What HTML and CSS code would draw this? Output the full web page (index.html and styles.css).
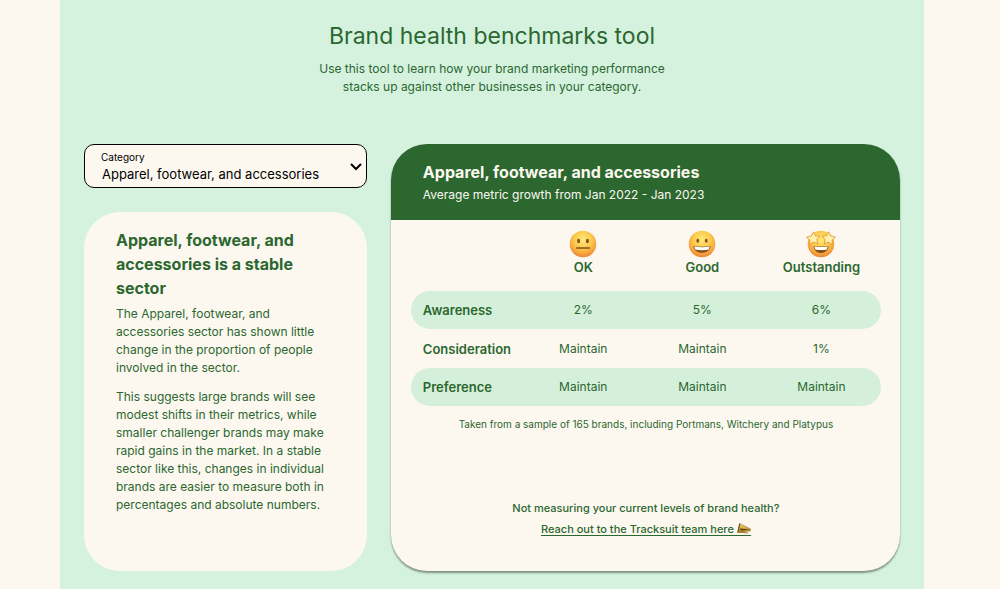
FILE: index.html
```html
<!DOCTYPE html>
<html lang="en">
<head>
<meta charset="utf-8">
<meta name="viewport" content="width=device-width, initial-scale=1">
<title>Brand health benchmarks tool</title>
<link rel="stylesheet" href="styles.css">
</head>
<body>
<svg width="0" height="0" class="defs" aria-hidden="true">
  <defs>
    <radialGradient id="face" cx="50%" cy="34%" r="66%">
      <stop offset="0" stop-color="#ffe97a"/>
      <stop offset="0.5" stop-color="#fcc94c"/>
      <stop offset="0.82" stop-color="#f5a13c"/>
      <stop offset="1" stop-color="#e98333"/>
    </radialGradient>
    <linearGradient id="brass" x1="0" y1="0" x2="0" y2="1">
      <stop offset="0" stop-color="#f7dc6a"/>
      <stop offset="1" stop-color="#a8801f"/>
    </linearGradient>
  </defs>
</svg>
<main class="tool">
  <header class="intro">
    <h1 class="intro-title">Brand health benchmarks tool</h1>
    <p class="intro-text">Use this tool to learn how your brand marketing performance<br>stacks up against other businesses in your category.</p>
  </header>
  <div class="columns">
    <div class="side">
      <div class="picker">
        <label class="picker-label" for="category">Category</label>
        <select class="picker-select" id="category">
          <option>Apparel, footwear, and accessories</option>
        </select>
        <svg class="picker-arrow" viewBox="0 0 12 8" aria-hidden="true"><path d="M1 1l5 5 5-5"/></svg>
      </div>
      <section class="summary">
        <h2 class="summary-title">Apparel, footwear, and accessories is a stable sector</h2>
        <p class="summary-text">The Apparel, footwear, and accessories sector has shown little change in the proportion of people involved in the sector.</p>
        <p class="summary-text">This suggests large brands will see modest shifts in their metrics, while smaller challenger brands may make rapid gains in the market. In a stable sector like this, changes in individual brands are easier to measure both in percentages and absolute numbers.</p>
      </section>
    </div>
    <section class="report">
      <header class="report-head">
        <h2 class="report-title">Apparel, footwear, and accessories</h2>
        <p class="report-sub">Average metric growth from Jan 2022 - Jan 2023</p>
      </header>
      <div class="report-body">
        <table class="metrics">
          <thead>
            <tr>
              <td class="metrics-corner"></td>
              <th scope="col">
                <svg class="emoji" viewBox="0 0 28 28" aria-hidden="true">
                  <circle cx="14" cy="14" r="13.3" fill="url(#face)"/>
                  <ellipse cx="9.6" cy="11" rx="1.5" ry="2.2" fill="#85501c"/>
                  <ellipse cx="18.4" cy="11" rx="1.5" ry="2.2" fill="#85501c"/>
                  <path d="M7.600 18h12.800" stroke="#85501c" stroke-width="1.300" stroke-linecap="round"/>
                </svg>
                OK
              </th>
              <th scope="col">
                <svg class="emoji" viewBox="0 0 28 28" aria-hidden="true">
                  <circle cx="14" cy="14" r="13.3" fill="url(#face)"/>
                  <ellipse cx="9.8" cy="10.700" rx="1.400" ry="2" fill="#85501c"/>
                  <ellipse cx="18.2" cy="10.700" rx="1.400" ry="2" fill="#85501c"/>
                  <path d="M5.400 16q8.600 1.400 17.200 0c-.2 4.200-4 6.800-8.600 6.800s-8.400-2.600-8.600-6.800z" fill="#85501c"/>
                  <path d="M6.200 16.600q7.800 1.200 15.600 0l-1 3q-6.800 1.400-13.600 0z" fill="#fff"/>
                </svg>
                Good
              </th>
              <th scope="col">
                <svg class="emoji" viewBox="0 0 28 28" aria-hidden="true">
                  <circle cx="14" cy="14" r="13.3" fill="url(#face)"/>
                  <path d="M6.500 15.900q7.500 1.300 15 0c-.2 4.300-3.500 7-7.500 7s-7.300-2.700-7.500-7z" fill="#85501c"/>
                  <path d="M7.300 16.500q6.700 1.100 13.400 0l-.9 2.900q-5.800 1.200-11.600 0z" fill="#fff"/>
                  <path d="M6.500 1.800l1.800 4 4.600.3-3.200 3.500 1.200 4.300-4.400-1.800-3.900 2.400.3-4.400L-.5 7.200l4.900-1.400z" fill="#fff2ad" stroke="#df8f2c" stroke-width=".8" stroke-linejoin="round"/>
                  <path d="M21.500 1.800l-1.800 4-4.600.3 3.200 3.500-1.200 4.300 4.400-1.800 3.900 2.400-.3-4.400 3.400-2.900-4.900-1.400z" fill="#fff2ad" stroke="#df8f2c" stroke-width=".8" stroke-linejoin="round"/>
                </svg>
                Outstanding
              </th>
            </tr>
          </thead>
          <tbody>
            <tr class="striped"><th scope="row">Awareness</th><td>2%</td><td>5%</td><td>6%</td></tr>
            <tr><th scope="row">Consideration</th><td>Maintain</td><td>Maintain</td><td>1%</td></tr>
            <tr class="striped"><th scope="row">Preference</th><td>Maintain</td><td>Maintain</td><td>Maintain</td></tr>
          </tbody>
        </table>
        <p class="note">Taken from a sample of 165 brands, including Portmans, Witchery and Platypus</p>
        <div class="contact">
          <p class="contact-line">Not measuring your current levels of brand health?</p>
          <a class="contact-line contact-link" href="#contact">Reach out to the Tracksuit team here <svg class="horn" viewBox="0 0 14 11" aria-hidden="true">
            <path d="M2.700.5L13.300 5.800 13.600 7.800.6 9.600z" fill="url(#brass)" stroke="#8d6b1c" stroke-width=".5"/>
            <path d="M3 5.400l10.400 1.200L4 7.800z" fill="#5f4513"/>
            <path d="M.6 9.500L3.700 8.500l8 1.200-1 .8z" fill="#a57c20"/>
            <path d="M2.700.5L1 9.400" stroke="#604716" stroke-width="1"/>
          </svg></a>
        </div>
      </div>
    </section>
  </div>
</main>
</body>
</html>
```
FILE: styles.css
```css
* {
  box-sizing: border-box;
}

body {
  margin: 0;
  padding: 0 76px 0 60px;
  background: #fcf8f0;
  color: #2b672f;
  font-family: Inter, "Liberation Sans", sans-serif;
  font-size: 12px;
  line-height: 18px;
}

h1, h2, p {
  margin: 0;
}

.defs {
  position: absolute;
}

.tool {
  min-height: 100vh;
  padding: 20px 24px 18px;
  background: #d5f2df;
}

.intro {
  margin-bottom: 48px;
  text-align: center;
}

.intro-title {
  margin-bottom: 8px;
  font-size: 23px;
  font-weight: 400;
  line-height: 32px;
}

.columns {
  display: grid;
  grid-template-columns: 5fr 9fr;
  gap: 24px;
}

.side {
  display: flex;
  flex-direction: column;
  gap: 24px;
}

.picker {
  position: relative;
  padding: 5px 0 3px;
  border: 1px solid #000;
  border-radius: 10px;
  background: #fcf8f0;
  color: #000;
}

.picker-label {
  display: block;
  padding-left: 16px;
  font-size: 10px;
  line-height: 14px;
}

.picker-select {
  display: block;
  width: 100%;
  height: 20px;
  padding: 0 32px 0 17px;
  border: 0;
  background: transparent;
  color: #000;
  font: inherit;
  font-size: 13px;
  appearance: none;
}

.picker-arrow {
  position: absolute;
  top: 18px;
  right: 4px;
  width: 12px;
  height: 8px;
  fill: none;
  stroke: #000;
  stroke-width: 2;
  pointer-events: none;
}

.summary {
  flex: 1;
  padding: 16px 32px 32px;
  border-radius: 36px;
  background: #fcf8f0;
}

.summary-title {
  margin-bottom: 5px;
  font-size: 16px;
  font-weight: 700;
  line-height: 24px;
}

.summary-text {
  margin-bottom: 11px;
}

.report {
  overflow: hidden;
  border-radius: 36px;
  background: #fcf8f0;
  box-shadow: 0 2px 2px rgba(0, 0, 0, 0.4);
}

.report-head {
  padding: 16px 32px;
  background: #2b672f;
  color: #fcf8f0;
}

.report-title {
  margin-bottom: 2px;
  font-size: 16px;
  font-weight: 700;
  line-height: 24px;
}

.report-body {
  padding: 10px 19px 33px 20px;
  text-align: center;
}

.metrics {
  width: 100%;
  border-collapse: collapse;
  table-layout: fixed;
}

.metrics td,
.metrics th {
  height: 39px;
  padding: 0;
}

.metrics th {
  font-size: 13px;
  font-weight: 600;
}

.metrics thead th {
  height: 61px;
  padding-bottom: 14px;
  vertical-align: top;
}

.metrics .metrics-corner {
  width: 24%;
}

.metrics tbody th {
  padding-left: 12px;
  text-align: left;
}

.metrics .striped > * {
  height: 38px;
  background: #d5f0da;
}

.striped > :first-child {
  border-radius: 19px 0 0 19px;
}

.striped > :last-child {
  border-radius: 0 19px 19px 0;
}

.emoji {
  display: block;
  width: 28px;
  height: 28px;
  margin: 0 auto;
  overflow: visible;
}

.note {
  margin: 9px 0 66px;
  font-size: 10px;
}

.contact {
  display: flex;
  flex-direction: column;
  align-items: center;
  gap: 3px;
}

.contact-line {
  font-size: 11px;
  font-weight: 500;
}

.contact-link {
  color: inherit;
  background: linear-gradient(currentColor, currentColor) 0 15px / 100% 1px no-repeat;
  text-decoration: none;
}

.horn {
  width: 14px;
  height: 11px;
  vertical-align: -1px;
}
```
